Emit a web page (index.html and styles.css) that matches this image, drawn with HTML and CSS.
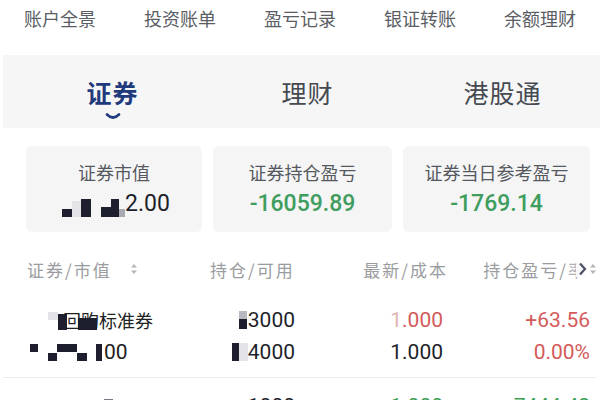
FILE: index.html
```html
<!DOCTYPE html>
<html lang="zh-CN">
<head>
<meta charset="utf-8">
<title>账户</title>
<link rel="stylesheet" href="styles.css">
</head>
<body>
<div class="page">
  <nav class="topnav">
    <span>账户全景</span>
    <span>投资账单</span>
    <span>盈亏记录</span>
    <span>银证转账</span>
    <span>余额理财</span>
  </nav>

  <div class="tabs">
    <div class="tab active">
      <span class="tab-text">证券</span>
      <svg class="smile" width="16" height="7" viewBox="0 0 16 7"><path d="M2 1.5 Q8 7.5 14 1.5" fill="none" stroke="#1f3b7c" stroke-width="2.6" stroke-linecap="round"/></svg>
    </div>
    <div class="tab"><span class="tab-text">理财</span></div>
    <div class="tab"><span class="tab-text">港股通</span></div>
  </div>

  <div class="cards">
    <div class="card">
      <div class="card-label">证券市值</div>
      <div class="card-value dark">
        <span class="mosaic m-card">
          <i class="c d" style="width:10px;height:8px"></i>
          <i class="c l" style="width:9px;height:16px"></i>
          <i class="c d" style="width:10px;height:18px"></i>
          <i class="c" style="width:10px;height:4px"></i>
          <i class="c d" style="width:10px;height:10px"></i>
          <i class="c d" style="width:8px;height:18px"></i>
          <i class="c g" style="width:6px;height:8px"></i>
        </span>2.00
      </div>
    </div>
    <div class="card">
      <div class="card-label">证券持仓盈亏</div>
      <div class="card-value green">-16059.89</div>
    </div>
    <div class="card">
      <div class="card-label">证券当日参考盈亏</div>
      <div class="card-value green">-1769.14</div>
    </div>
  </div>

  <div class="thead">
    <div class="th th1">证券/市值<svg class="sort" width="8" height="12" viewBox="0 0 8 12"><path d="M4 1 L7 4.5 H1 Z M4 11 L7 7.5 H1 Z" fill="#b5b5b5"/></svg></div>
    <div class="th th2">持仓/可用</div>
    <div class="th th3">最新/成本</div>
    <div class="th th4">持仓盈亏/<span class="under">率</span><svg class="chev" width="12" height="16" viewBox="0 0 12 16"><path d="M4 2.5 L9 8 L4 13.5" fill="none" stroke="#4a4f66" stroke-width="2.2"/></svg><svg class="sort" width="8" height="12" viewBox="0 0 8 12"><path d="M4 1 L7 4.5 H1 Z M4 11 L7 7.5 H1 Z" fill="#b5b5b5"/></svg></div>
  </div>

  <div class="group">
    <div class="row">
      <div class="cell name">
        <span class="mosaic m-name1">
          <i class="c l" style="width:10px;height:8px;margin-bottom:10px"></i>
          <i class="c d" style="width:9px;height:16px"></i>
          <i class="c" style="width:11px;height:2px"></i>
          <i class="c d" style="width:19px;height:12px"></i>
        </span><span class="name-text">回购标准券</span>
      </div>
      <div class="cell num">
        <span class="mosaic m-col2">
          <i class="c split" style="width:8px;height:18px"></i>
        </span>3000
      </div>
      <div class="cell num red"><span class="faint">1</span>.000</div>
      <div class="cell num red">+63.56</div>
    </div>
    <div class="row">
      <div class="cell name">
        <span class="mosaic m-name2">
          <i class="c d" style="width:8px;height:8px;margin-bottom:9px"></i>
          <i class="c" style="width:10px;height:2px"></i>
          <i class="c d" style="width:9px;height:8px"></i>
          <i class="c d" style="width:20px;height:8px;margin-bottom:9px"></i>
          <i class="c d" style="width:10px;height:8px"></i>
          <i class="c" style="width:9px;height:2px"></i>
          <i class="c d" style="width:6px;height:17px"></i>
        </span><span class="tail">00</span>
      </div>
      <div class="cell num">
        <span class="mosaic m-col2b">
          <i class="c d" style="width:7px;height:18px"></i>
          <i class="c l" style="width:9px;height:18px"></i>
        </span>4000
      </div>
      <div class="cell num">1.000</div>
      <div class="cell num red">0.00%</div>
    </div>
  </div>

  <div class="group">
    <div class="row">
      <div class="cell name">
        <span class="mosaic m-name3">
          <i class="c l" style="width:9px;height:14px"></i>
          <i class="c" style="width:65px;height:2px"></i>
          <i class="c d" style="width:9px;height:16px"></i>
        </span>
      </div>
      <div class="cell num">1000</div>
      <div class="cell num green">1.000</div>
      <div class="cell num green">-7444.42</div>
    </div>
  </div>
</div>
</body>
</html>
```

FILE: styles.css
```css
* { box-sizing: border-box; margin: 0; padding: 0; }

html, body {
  width: 600px;
  height: 400px;
  overflow: hidden;
  background: #ffffff;
}

body {
  font-family: "Noto Sans CJK SC", "Noto Sans", sans-serif;
  color: #222;
}

.page {
  width: 600px;
}

/* top navigation */
.topnav {
  display: grid;
  grid-template-columns: repeat(5, 1fr);
  height: 36px;
  align-items: center;
  text-align: center;
  font-size: 18px;
  color: #5a5e64;
  line-height: 36px;
}

/* tab band */
.tabs {
  margin: 19px 0 0 3px;
  height: 73px;
  background: #f6f6f7;
  display: grid;
  grid-template-columns: 1fr 1fr 1fr;
  padding-left: 12px;
}

.tab {
  display: flex;
  flex-direction: column;
  align-items: center;
  padding-top: 21px;
}

.tab-text {
  font-size: 25px;
  line-height: 32px;
  color: #454a50;
  letter-spacing: 1px;
}

.tab.active .tab-text {
  color: #1f3b7c;
  font-weight: 700;
}

.smile {
  display: block;
  margin-top: 5px;
}

/* summary cards */
.cards {
  margin-top: 18px;
  padding: 0 10px 0 26px;
  display: grid;
  grid-template-columns: 176px 179px 187px;
  gap: 11px;
}

.card {
  height: 86px;
  background: #f5f5f6;
  border-radius: 6px;
  padding-top: 14px;
  text-align: center;
}

.card-label {
  font-size: 18px;
  line-height: 24px;
  color: #55595e;
}

.card-value {
  margin-top: 5px;
  font-family: "Roboto", "Liberation Sans", sans-serif;
  font-size: 23px;
  font-weight: 500;
  line-height: 30px;
  display: flex;
  justify-content: center;
  align-items: center;
}

.card-value.green { color: #3f9d5e; }
.card-value.dark { color: #1d1f2a; padding-left: 4px; font-weight: 400; }

/* mosaic (censor) blocks */
.mosaic {
  display: inline-flex;
  align-items: flex-end;
  vertical-align: middle;
  position: relative;
  z-index: 1;
}

.mosaic .c {
  display: block;
  flex: none;
}

.c.d { background: #1e1f2e; }
.c.l { background: #e4e4e8; }
.c.g { background: #a9a9b2; }
.c.split { background: linear-gradient(#b8b8c0 0 45%, #1e1f2e 45% 100%); }

.m-card { height: 20px; margin-top: 6px; }

/* table header */
.thead {
  margin-top: 20px;
  height: 34px;
  display: grid;
  grid-template-columns: 183px 88px 148px 147px;
  padding-left: 27px;
  align-items: center;
  font-size: 17px;
  color: #9a9ca0;
  letter-spacing: 2px;
}

.th { display: flex; align-items: center; white-space: nowrap; }
.th1 .sort { margin-left: 18px; }
.th3 { justify-content: flex-end; margin-right: -2px; }
.th4 { justify-content: flex-end; margin-right: -4px; }

.under {
  color: #b0b2b6;
  letter-spacing: 0;
}

.chev {
  margin-left: -9px;
  background: rgba(255, 255, 255, 0.85);
  position: relative;
}

.th4 .sort { margin-left: 1px; }

/* table rows */
.group {
  padding: 18px 0 9px;
  border-bottom: 1px solid #ececee;
  margin: 0 4px 0 3px;
}

.group + .group {
  padding-top: 12px;
  border-bottom: none;
}

.row {
  display: grid;
  grid-template-columns: 180px 88px 148px 147px;
  padding-left: 24px;
  height: 32px;
  align-items: center;
}

.cell {
  display: flex;
  align-items: center;
  white-space: nowrap;
}

.name {
  color: #222;
  font-family: "Roboto", "Noto Sans CJK SC", sans-serif;
  font-size: 21px;
}

.name-text {
  font-family: "Noto Sans CJK SC", sans-serif;
  font-size: 18px;
  margin-left: -34px;
}

.tail { margin-left: 2px; }

.m-name1 { margin-left: 21px; height: 20px; }
.m-name2 { margin-left: 3px; height: 18px; }
.m-name3 { margin-left: 3px; height: 18px; opacity: 0.6; }

.num {
  justify-content: flex-end;
  font-family: "Roboto", "Liberation Sans", sans-serif;
  font-size: 21px;
  color: #1d1f2a;
}

.num.red { color: #d35a5a; }
.num.green { color: #3c9e55; }

.faint { color: #e3b4b4; }

.m-col2 { margin-right: 1px; height: 18px; }
.m-col2b { height: 18px; }
```
